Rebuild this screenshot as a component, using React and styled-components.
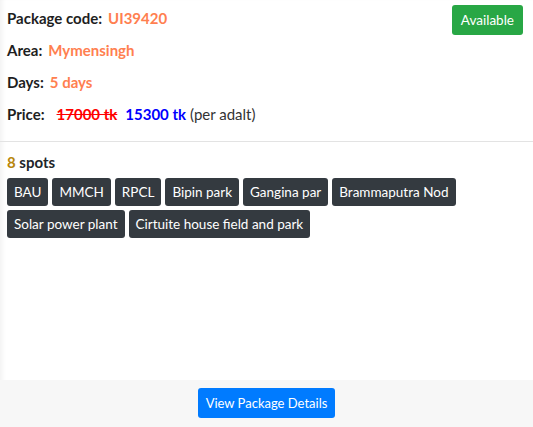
import React from 'react';
import styled, { createGlobalStyle } from 'styled-components';

const GlobalStyle = createGlobalStyle`
  html, body {
    margin: 0;
    padding: 0;
    background: #fff;
  }
  body {
    font-family: Lato, 'Open Sans', sans-serif;
    color: #212529;
  }
`;

const Card = styled.div`
  min-height: 100vh;
  display: flex;
  flex-direction: column;
  box-shadow: inset 5px 0 5px -3px rgba(0, 0, 0, 0.06);
`;

const CardBody = styled.div`
  flex: 1;
  padding: 6px 10px 0 7px;
`;

const TopRow = styled.div`
  display: flex;
  justify-content: space-between;
  align-items: flex-start;
`;

const InfoList = styled.div`
  display: flex;
  flex-direction: column;
  gap: 8px;
`;

const InfoRow = styled.div`
  font-size: 15px;
  line-height: 24px;
  white-space: nowrap;
`;

const Label = styled.span`
  font-weight: 700;
  color: #1e1e1e;
  margin-right: ${props => props.gap || 6}px;
`;

const Value = styled.span`
  font-weight: 700;
  color: ${props => props.color || '#ff7f50'};
  text-decoration: ${props => props.strike ? 'line-through' : 'none'};
  margin-right: ${props => props.gap || 0}px;
`;

const Note = styled.span`
  color: #333;
  margin-left: 4px;
`;

const StatusBadge = styled.div`
  background: #28a745;
  color: #fff;
  font-size: 13.5px;
  line-height: 30px;
  padding: 0 9px;
  border-radius: 3px;
  margin-top: -1px;
`;

const Divider = styled.hr`
  border: 0;
  border-top: 1px solid #e3e3e3;
  margin: 15px -10px 8px -7px;
`;

const SpotsTitle = styled.div`
  font-size: 15px;
  line-height: 24px;
  font-weight: 700;
  margin-bottom: 4px;
`;

const Count = styled.span`
  color: #b8860b;
`;

const SpotList = styled.div`
  display: flex;
  flex-wrap: wrap;
  gap: 4px;
`;

const Spot = styled.span`
  background: #343a40;
  color: #fff;
  font-size: 13.5px;
  line-height: 28px;
  padding: 0 7px;
  border-radius: 3px;
`;

const Footer = styled.div`
  background: #f7f7f7;
  padding: 8px 0 9px;
  display: flex;
  justify-content: center;
`;

const DetailsButton = styled.button`
  background: #007bff;
  color: #fff;
  border: 0;
  border-radius: 3px;
  font-family: inherit;
  font-size: 13px;
  height: 30px;
  padding: 0 8px;
  cursor: pointer;
`;

const spots = [
  'BAU',
  'MMCH',
  'RPCL',
  'Bipin park',
  'Gangina par',
  'Brammaputra Nod',
  'Solar power plant',
  'Cirtuite house field and park',
];

export default function App() {
  return (
    <>
      <GlobalStyle />
      <Card>
        <CardBody>
          <TopRow>
            <InfoList>
              <InfoRow>
                <Label>Package code:</Label>
                <Value>UI39420</Value>
              </InfoRow>
              <InfoRow>
                <Label>Area:</Label>
                <Value>Mymensingh</Value>
              </InfoRow>
              <InfoRow>
                <Label>Days:</Label>
                <Value>5 days</Value>
              </InfoRow>
              <InfoRow>
                <Label gap={12}>Price:</Label>
                <Value color="#ff0000" strike gap={8}>17000 tk</Value>
                <Value color="#0000ff">15300 tk</Value>
                <Note>(per adalt)</Note>
              </InfoRow>
            </InfoList>
            <StatusBadge>Available</StatusBadge>
          </TopRow>

          <Divider />

          <SpotsTitle>
            <Count>8</Count> spots
          </SpotsTitle>
          <SpotList>
            {spots.map(s => (
              <Spot key={s}>{s}</Spot>
            ))}
          </SpotList>
        </CardBody>

        <Footer>
          <DetailsButton>View Package Details</DetailsButton>
        </Footer>
      </Card>
    </>
  );
}
